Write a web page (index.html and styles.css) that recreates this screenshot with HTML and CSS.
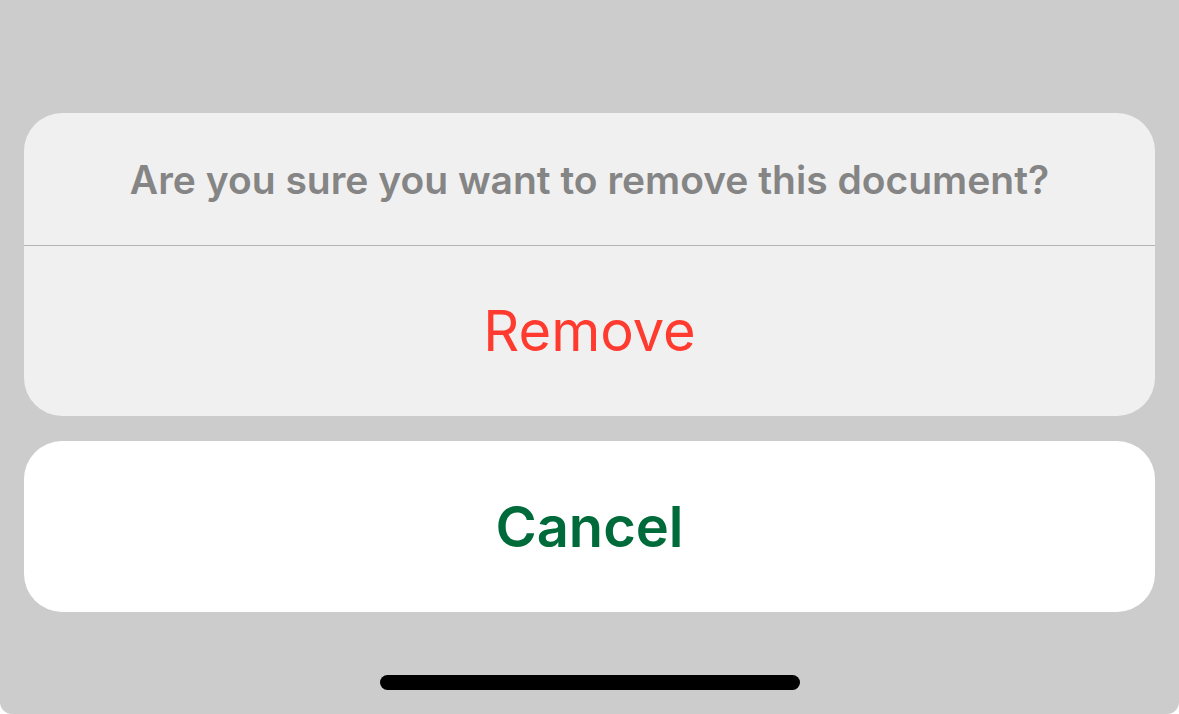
FILE: index.html
```html
<!DOCTYPE html>
<html lang="en">
<head>
<meta charset="utf-8">
<title>Remove document</title>
<link rel="stylesheet" href="styles.css">
</head>
<body>
<div class="screen">
  <div class="sheet">
    <div class="sheet-title">Are you sure you want to remove this document?</div>
    <div class="sheet-action destructive">Remove</div>
  </div>
  <div class="cancel-card">
    <div class="sheet-action cancel">Cancel</div>
  </div>
  <div class="home-indicator"></div>
</div>
</body>
</html>
```
FILE: styles.css
```css
html, body {
  margin: 0;
  padding: 0;
  background: #ffffff;
}
body {
  font-family: Inter, "Noto Sans", "Liberation Sans", sans-serif;
}
.screen {
  width: 1179px;
  height: 714px;
  box-sizing: border-box;
  background: #cccccc;
  border-radius: 0 0 12px 12px;
  padding: 113px 24px 0 24px;
  display: flex;
  flex-direction: column;
  gap: 25px;
}
.sheet {
  background: #f0f0f0;
  border-radius: 38px;
  display: flex;
  flex-direction: column;
  overflow: hidden;
}
.sheet-title {
  height: 132px;
  display: flex;
  align-items: center;
  justify-content: center;
  font-size: 39px;
  font-weight: 600;
  color: #858585;
  border-bottom: 1px solid #b3b3b3;
  letter-spacing: 0;
}
.sheet-action {
  height: 170px;
  display: flex;
  align-items: center;
  justify-content: center;
  font-size: 56px;
}
.destructive {
  color: #ff3b30;
  font-weight: 400;
}
.cancel-card {
  background: #ffffff;
  border-radius: 38px;
  height: 171px;
  display: flex;
  flex-direction: column;
}
.cancel {
  height: 171px;
  color: #006b3a;
  font-weight: 600;
}
.home-indicator {
  align-self: center;
  width: 420px;
  height: 15px;
  border-radius: 8px;
  background: #000000;
  margin-top: 38px;
}
```
